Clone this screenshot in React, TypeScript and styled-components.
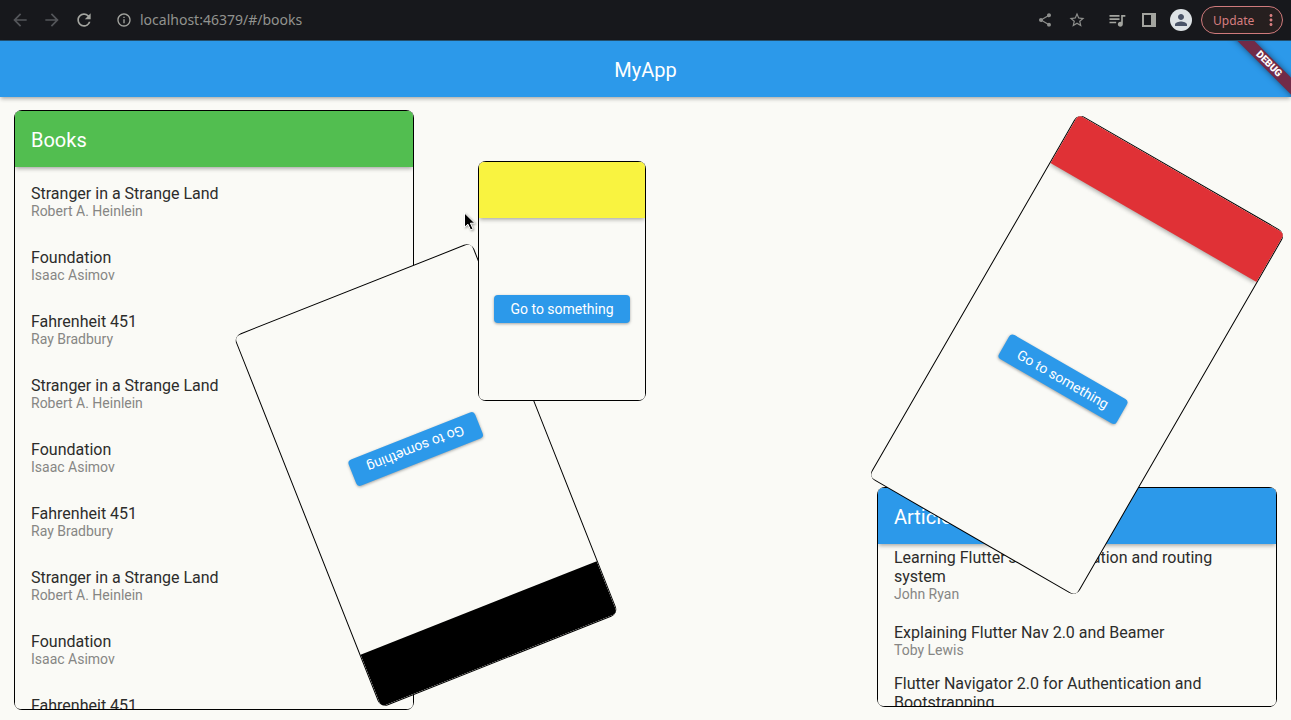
import React from "react";
import styled, { createGlobalStyle, css } from "styled-components";
import {
  MdArrowBack,
  MdArrowForward,
  MdInfoOutline,
  MdMoreVert,
  MdOutlineQueueMusic,
  MdPerson,
  MdRefresh,
  MdShare,
  MdStarBorder,
} from "react-icons/md";

const blue = "#2c99ea";
const paper = "#fafaf6";

const GlobalStyle = createGlobalStyle`
  * { box-sizing: border-box; }
  body {
    margin: 0;
    background: ${paper};
    font-family: Roboto, sans-serif;
    overflow: hidden;
  }
  button { font: inherit; border: 0; padding: 0; cursor: pointer; }
  h1, h2, p, ul { margin: 0; padding: 0; }
`;

const Page = styled.div`
  display: flex;
  flex-direction: column;
  min-height: 100vh;
`;

/* Browser toolbar */

const Toolbar = styled.header`
  display: flex;
  align-items: center;
  height: 41px;
  padding: 0 8px 0 10px;
  background: #17181c;
  border-bottom: 1px solid #24506f;
  font-family: "Noto Sans", sans-serif;
`;

const IconButton = styled.button<{ $color?: string }>`
  display: flex;
  align-items: center;
  justify-content: center;
  width: 32px;
  height: 32px;
  flex: none;
  background: none;
  color: ${(p) => p.$color ?? "#a3a49f"};
`;

const NavButtons = styled.nav`
  display: flex;
  margin-left: -6px;
`;

const Address = styled.div`
  display: flex;
  flex: 1;
  align-items: center;
  margin-left: 8px;
`;

const AddressInput = styled.input`
  flex: 1;
  min-width: 0;
  padding: 0;
  border: 0;
  outline: 0;
  background: none;
  color: #92938f;
  font-family: "Noto Sans", sans-serif;
  font-size: 14px;
  line-height: 20px;
`;

const Actions = styled.div`
  display: flex;
  align-items: center;
`;

const Separator = styled.span`
  width: 8px;
`;

const Avatar = styled.span`
  display: flex;
  align-items: center;
  justify-content: center;
  width: 22px;
  height: 22px;
  border-radius: 50%;
  background: #dde2e5;
  color: #4a5468;
`;

const UpdateButton = styled.button`
  && {
    display: flex;
    align-items: center;
    justify-content: space-between;
    width: 82px;
    height: 28px;
    margin-left: 4px;
    padding: 0 2px 0 11px;
    border: 1px solid #cf7a7c;
    border-radius: 14px;
    background: #261f1f;
    color: #d67e80;
    font-size: 12px;
  }
`;

/* Application */

const AppBar = styled.div`
  position: relative;
  z-index: 1;
  display: flex;
  align-items: center;
  justify-content: center;
  height: 56px;
  background: ${blue};
  color: #fff;
  box-shadow: 0 2px 4px -1px rgba(0, 0, 0, 0.3), 0 3px 4px rgba(0, 0, 0, 0.08);
`;

const AppTitle = styled.h1`
  padding-top: 2px;
  font-size: 20px;
  font-weight: 400;
  line-height: 24px;
`;

const BannerCorner = styled.div`
  position: absolute;
  top: 0;
  right: 0;
  width: 64px;
  height: 56px;
  overflow: hidden;
  pointer-events: none;
`;

const Banner = styled.span`
  position: absolute;
  top: 17px;
  right: -38px;
  width: 120px;
  height: 12px;
  transform: rotate(45deg);
  background: #722b48;
  box-shadow: 0 0 6px rgba(0, 0, 0, 0.5);
  color: #fff;
  font-size: 10px;
  font-weight: 900;
  line-height: 12px;
  text-align: center;
`;

const Board = styled.main`
  position: relative;
  flex: 1;
  overflow: hidden;
`;

interface Placement {
  $width: number;
  $height: number;
  $top?: number;
  $bottom?: number;
  $left?: number;
  $right?: number;
  $turn?: number;
}

const edge = (name: string, value?: number) =>
  value === undefined ? "" : `${name}: ${value}px;`;

const Frame = styled.section<Placement>`
  position: absolute;
  ${(p) => edge("top", p.$top)}
  ${(p) => edge("bottom", p.$bottom)}
  ${(p) => edge("left", p.$left)}
  ${(p) => edge("right", p.$right)}
  width: ${(p) => p.$width}px;
  height: ${(p) => p.$height}px;
  padding: 1px;
  border-radius: 8px;
  background: #000;
  ${(p) =>
    p.$turn &&
    css`
      transform: rotate(${p.$turn}deg);
    `}
`;

const FrameBody = styled.div`
  display: flex;
  flex-direction: column;
  height: 100%;
  overflow: hidden;
  border-radius: 5px;
  background: ${paper};
`;

const CardBar = styled.div<{ $color: string; $flat?: boolean }>`
  display: flex;
  flex: none;
  align-items: center;
  height: 56px;
  padding: 2px 16px 0;
  background: ${(p) => p.$color};
  color: #fff;
  box-shadow: ${(p) =>
    p.$flat
      ? "none"
      : "0 2px 4px -1px rgba(0, 0, 0, 0.3), 0 3px 4px rgba(0, 0, 0, 0.08)"};
`;

const CardTitle = styled.h2`
  font-size: 20px;
  font-weight: 400;
  line-height: 24px;
`;

const CardCenter = styled.div`
  display: flex;
  flex: 1;
  align-items: center;
  justify-content: center;
`;

const GoButton = styled.button<{ $lift: number }>`
  && {
    min-width: 136px;
    height: 28px;
    padding: 0 16px;
    border-radius: 4px;
    background: ${blue};
    color: #fff;
    font-size: 14px;
    font-weight: 400;
    line-height: 28px;
    white-space: nowrap;
    box-shadow: 0 ${(p) => p.$lift}px 3px rgba(0, 0, 0, 0.35);
  }
`;

const List = styled.ul<{ $top: number }>`
  flex: 1;
  min-height: 0;
  padding: ${(p) => p.$top}px 16px 0;
  overflow: hidden;
  list-style: none;
`;

const Item = styled.li<{ $height: number }>`
  height: ${(p) => p.$height}px;
`;

const ItemTitle = styled.p`
  color: #2c2c2b;
  font-size: 16px;
  line-height: 19px;
`;

const ItemAuthor = styled.p`
  color: #868684;
  font-size: 14px;
  line-height: 16px;
`;

const Pointer = styled.svg`
  position: absolute;
  top: 115px;
  left: 463px;
  filter: drop-shadow(1px 1px 1px rgba(0, 0, 0, 0.35));
`;

const titles = [
  ["Stranger in a Strange Land", "Robert A. Heinlein"],
  ["Foundation", "Isaac Asimov"],
  ["Fahrenheit 451", "Ray Bradbury"],
];
const books = [...titles, ...titles, ...titles];

const articles = [
  { title: "Learning Flutter’s new navigation and routing system", author: "John Ryan", height: 75 },
  { title: "Explaining Flutter Nav 2.0 and Beamer", author: "Toby Lewis", height: 51 },
  { title: "Flutter Navigator 2.0 for Authentication and Bootstrapping", author: "", height: 75 },
];

function PlainCard({
  color,
  flat,
  lift = 1,
  ...place
}: Placement & { color: string; flat?: boolean; lift?: number }) {
  return (
    <Frame {...place}>
      <FrameBody>
        <CardBar $color={color} $flat={flat} />
        <CardCenter>
          <GoButton type="button" $lift={lift}>Go to something</GoButton>
        </CardCenter>
      </FrameBody>
    </Frame>
  );
}

export default function App() {
  return (
    <Page>
      <GlobalStyle />
      <Toolbar>
        <NavButtons>
          <IconButton type="button" aria-label="Back" $color="#54565a"><MdArrowBack size={20} /></IconButton>
          <IconButton type="button" aria-label="Forward" $color="#54565a"><MdArrowForward size={20} /></IconButton>
          <IconButton type="button" aria-label="Reload"><MdRefresh size={20} /></IconButton>
        </NavButtons>
        <Address>
          <IconButton type="button" aria-label="Site information"><MdInfoOutline size={16} /></IconButton>
          <AddressInput aria-label="Address" defaultValue="localhost:46379/#/books" />
        </Address>
        <Actions>
          <IconButton type="button" aria-label="Share" $color="#8e8f8d"><MdShare size={16} /></IconButton>
          <IconButton type="button" aria-label="Bookmark" $color="#8e8f8d"><MdStarBorder size={18} /></IconButton>
          <Separator />
          <IconButton type="button" aria-label="Media"><MdOutlineQueueMusic size={20} /></IconButton>
          <IconButton type="button" aria-label="Side panel">
            <svg width="14" height="14" viewBox="0 0 14 14" fill="currentColor" aria-hidden="true">
              <path fillRule="evenodd" d="M0 0H14V14H0ZM2 2V12H9V2Z" />
            </svg>
          </IconButton>
          <IconButton type="button" aria-label="Profile">
            <Avatar><MdPerson size={18} /></Avatar>
          </IconButton>
          <UpdateButton type="button">
            Update
            <MdMoreVert size={18} />
          </UpdateButton>
        </Actions>
      </Toolbar>

      <AppBar>
        <AppTitle>MyApp</AppTitle>
        <BannerCorner>
          <Banner>DEBUG</Banner>
        </BannerCorner>
      </AppBar>

      <Board>
        <Frame $left={14} $top={13} $width={400} $height={600}>
          <FrameBody>
            <CardBar $color="#52be50"><CardTitle>Books</CardTitle></CardBar>
            <List $top={17}>
              {books.map(([title, author], i) => (
                <Item key={i} $height={64}>
                  <ItemTitle>{title}</ItemTitle>
                  <ItemAuthor>{author}</ItemAuthor>
                </Item>
              ))}
            </List>
          </FrameBody>
        </Frame>

        <Frame $right={14} $bottom={13} $width={400} $height={220}>
          <FrameBody>
            <CardBar $color={blue}><CardTitle>Articles</CardTitle></CardBar>
            <List $top={4}>
              {articles.map((a) => (
                <Item key={a.title} $height={a.height}>
                  <ItemTitle>{a.title}</ItemTitle>
                  {a.author && <ItemAuthor>{a.author}</ItemAuthor>}
                </Item>
              ))}
            </List>
          </FrameBody>
        </Frame>

        <PlainCard color="#e03136" $right={94} $top={48} $width={240} $height={420} $turn={30} />
        <PlainCard color="#000" flat lift={-1} $left={298} $top={178} $width={256} $height={400} $turn={158.4} />
        <PlainCard color="#f9f340" $left={478} $top={64} $width={168} $height={240} />

        <Pointer width="14" height="20" viewBox="0 0 14 20" aria-hidden="true">
          <path
            d="M1.5 1V15.2L4.9 12.2L7.6 18L10 16.9L7.4 11.2H11.8Z"
            fill="#000"
            stroke="#fff"
            strokeWidth="1"
          />
        </Pointer>
      </Board>
    </Page>
  );
}
